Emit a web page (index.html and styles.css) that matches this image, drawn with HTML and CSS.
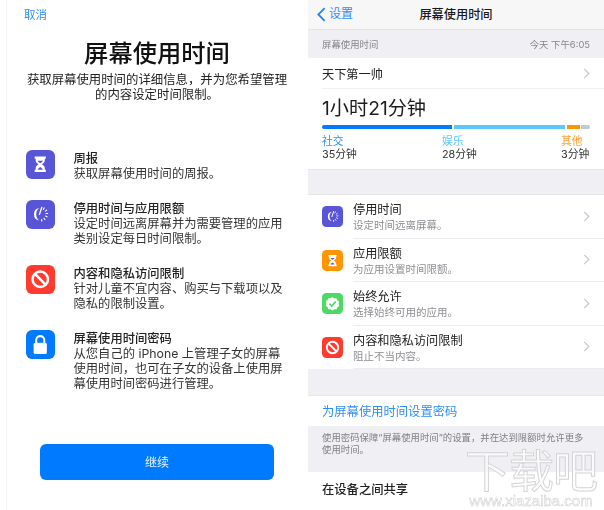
FILE: index.html
```html
<!DOCTYPE html>
<html lang="zh-CN">
<head>
<meta charset="utf-8">
<title>屏幕使用时间</title>
<link rel="stylesheet" href="styles.css">
</head>
<body>
<svg class="defs" width="0" height="0" aria-hidden="true">
  <defs>
    <symbol id="hourglass" viewBox="0 0 28 28">
      <path d="M8.5 6.5h11v2.2h-1v1.6c0 2-1.7 2.8-2.8 3.7 1.100.9 2.800 1.700 2.800 3.700v1.600h1v2.200h-11v-2.200h1v-1.600c0-2 1.700-2.800 2.800-3.700-1.100-.9-2.800-1.700-2.800-3.700v-1.600h-1z" fill="#fff"/>
      <path d="M11.300 10.500h5.400c-.3 1-1.700 1.700-2.700 2.500-1-.8-2.400-1.500-2.700-2.500zM11.500 19.300c.4-1.200 1.600-1.900 2.500-2.600.9.700 2.100 1.400 2.500 2.600z" class="glass-cut"/>
    </symbol>
    <symbol id="downtime" viewBox="0 0 28 28">
      <path d="M13 7.800a6.300 6.300 0 0 0 0 12.400c-2-1.600-3-3.800-3-6.200s1-4.600 3-6.200z" fill="#fff"/>
      <path d="M15.500 7.300l-2.300 6.800" stroke="#fff" stroke-width="1.300" fill="none" stroke-linecap="round"/>
      <g stroke="#fff" stroke-width="1.100" stroke-linecap="round">
        <path d="M17.800 7.800l-.7 1.500M20.300 10l-1.300.9M21.300 13.200h-1.600M20.700 16.500l-1.400-.7M18.600 19.200l-.9-1.300M15.600 20.700l-.3-1.600"/>
      </g>
    </symbol>
    <symbol id="block" viewBox="0 0 28 28">
      <circle cx="14" cy="14" r="7.600" fill="none" stroke="#fff" stroke-width="2.500"/>
      <path d="M8.800 8.800l10.400 10.400" stroke="#fff" stroke-width="2.500"/>
    </symbol>
    <symbol id="lock" viewBox="0 0 28 28">
      <rect x="7.500" y="12.500" width="13" height="11" rx="1.500" fill="#fff"/>
      <path d="M10 13v-3a4 4 0 0 1 8 0v3" fill="none" stroke="#fff" stroke-width="2"/>
    </symbol>
    <symbol id="allow" viewBox="0 0 28 28">
      <path d="M14 5.500l2.500 1.700 3-.2 1 2.800 2.500 1.700-.9 2.900.9 2.900-2.500 1.700-1 2.800-3-.2-2.500 1.700-2.500-1.700-3 .2-1-2.800L5 16.900l.9-2.900-.9-2.900 2.500-1.700 1-2.800 3 .2z" fill="#fff"/>
      <path d="M10 14.300l3 3 5.200-5.800" fill="none" stroke="#4cd964" stroke-width="2.200"/>
    </symbol>
    <symbol id="chevron" viewBox="0 0 7 12">
      <path d="M1 1l5 5-5 5" fill="none" stroke="#c7c7cc" stroke-width="1.300"/>
    </symbol>
  </defs>
</svg>

<main class="page">
  <section class="setup">
    <a class="cancel">取消</a>
    <h1 class="setup-title">屏幕使用时间</h1>
    <p class="setup-intro">获取屏幕使用时间的详细信息，并为您希望管理<br>的内容设定时间限制。</p>
    <ul class="features">
      <li class="feature">
        <svg class="feature-icon bg-indigo"><use href="#hourglass"/></svg>
        <div class="feature-text"><strong>周报</strong><span>获取屏幕使用时间的周报。</span></div>
      </li>
      <li class="feature">
        <svg class="feature-icon bg-indigo"><use href="#downtime"/></svg>
        <div class="feature-text"><strong>停用时间与应用限额</strong><span>设定时间远离屏幕并为需要管理的应用<br>类别设定每日时间限制。</span></div>
      </li>
      <li class="feature">
        <svg class="feature-icon bg-red"><use href="#block"/></svg>
        <div class="feature-text"><strong>内容和隐私访问限制</strong><span>针对儿童不宜内容、购买与下载项以及<br>隐私的限制设置。</span></div>
      </li>
      <li class="feature">
        <svg class="feature-icon bg-blue"><use href="#lock"/></svg>
        <div class="feature-text"><strong>屏幕使用时间密码</strong><span>从您自己的 iPhone 上管理子女的屏幕<br>使用时间，也可在子女的设备上使用屏<br>幕使用时间密码进行管理。</span></div>
      </li>
    </ul>
    <button class="continue">继续</button>
  </section>

  <section class="settings">
    <header class="nav">
      <a class="back">
        <svg class="back-chevron" viewBox="0 0 10 16"><path d="M8.500 1L1.500 8l7 7" fill="none" stroke="#1c86f7" stroke-width="2"/></svg>设置
      </a>
      <span class="nav-title">屏幕使用时间</span>
    </header>
    <div class="group-head"><span>屏幕使用时间</span><span>今天 下午6:05</span></div>
    <div class="card usage">
      <div class="user-row"><span>天下第一帅</span><svg class="chevron"><use href="#chevron"/></svg></div>
      <div class="total">1小时21分钟</div>
      <div class="bar">
        <i class="seg seg-social"></i><i class="seg seg-fun"></i><i class="seg seg-other"></i><i class="seg seg-rest"></i>
      </div>
      <div class="legend">
        <div class="legend-item legend-social"><b>社交</b><span>35分钟</span></div>
        <div class="legend-item legend-fun"><b>娱乐</b><span>28分钟</span></div>
        <div class="legend-item legend-other"><b>其他</b><span>3分钟</span></div>
      </div>
    </div>
    <div class="spacer"></div>
    <div class="card list">
      <div class="row">
        <svg class="row-icon bg-indigo"><use href="#downtime"/></svg>
        <div class="row-body"><div class="row-text"><strong>停用时间</strong><span>设定时间远离屏幕。</span></div><svg class="chevron"><use href="#chevron"/></svg></div>
      </div>
      <div class="row">
        <svg class="row-icon bg-orange"><use href="#hourglass"/></svg>
        <div class="row-body"><div class="row-text"><strong>应用限额</strong><span>为应用设置时间限额。</span></div><svg class="chevron"><use href="#chevron"/></svg></div>
      </div>
      <div class="row">
        <svg class="row-icon bg-green"><use href="#allow"/></svg>
        <div class="row-body"><div class="row-text"><strong>始终允许</strong><span>选择始终可用的应用。</span></div><svg class="chevron"><use href="#chevron"/></svg></div>
      </div>
      <div class="row">
        <svg class="row-icon bg-red"><use href="#block"/></svg>
        <div class="row-body"><div class="row-text"><strong>内容和隐私访问限制</strong><span>阻止不当内容。</span></div><svg class="chevron"><use href="#chevron"/></svg></div>
      </div>
    </div>
    <div class="spacer spacer-b"></div>
    <div class="card single link">为屏幕使用时间设置密码</div>
    <p class="note">使用密码保障“屏幕使用时间”的设置，并在达到限额时允许更多使用时间。</p>
    <div class="card single share">在设备之间共享</div>
    <div class="watermark" aria-hidden="true"><span class="wm-big">下载吧</span><span class="wm-url">www.xiazaiba.com</span></div>
  </section>
</main>
</body>
</html>
```

FILE: styles.css
```css
* { box-sizing: border-box; }
html, body { margin: 0; padding: 0; background: #fff; }
body {
  width: 604px;
  height: 510px;
  overflow: hidden;
  font-family: "Inter", "Noto Sans CJK SC", sans-serif;
  color: #1c1c1e;
}
.defs { position: absolute; }
.page {
  display: flex;
  height: 510px;
  filter: blur(0.35px);
}

/* left: onboarding */
.setup {
  width: 294px;
  margin-left: 6px;
  border-left: 1px solid #f6f6f6;
  display: flex;
  flex-direction: column;
  padding-left: 19px;
}
.cancel {
  font-size: 11.5px;
  line-height: 16px;
  margin: 7px 0 0 -2px;
  color: #2f8ffa;
}
.setup-title {
  margin: 13px 0 0 -20px;
  width: 302px;
  text-align: center;
  font-size: 24.300px;
  line-height: 34px;
  font-weight: 500;
  color: #111;
}
.setup-intro {
  margin: 3px 0 0 -20px;
  width: 302px;
  text-align: center;
  font-size: 12.400px;
  line-height: 14.500px;
  color: #222;
}
.features {
  list-style: none;
  margin: 49px 0 0;
  padding: 0;
  display: flex;
  flex-direction: column;
  gap: 20px;
}
.feature { display: flex; gap: 19px; }
.feature-icon {
  flex: none;
  width: 28.500px;
  height: 28.500px;
  border-radius: 6px;
  margin-top: -1px;
}
.feature-text {
  display: flex;
  flex-direction: column;
  font-size: 12.300px;
  line-height: 15px;
  color: #333;
}
.feature-text strong { font-weight: 500; color: #222; }
.bg-indigo { background: #5856d6; }
.bg-red { background: #ff3b30; }
.bg-blue { background: #007aff; }
.bg-orange { background: #ff9500; }
.bg-green { background: #4cd964; }
.glass-cut { fill: #5856d6; }
.bg-orange .glass-cut { fill: #ff9500; }
.continue {
  margin: auto 0 30.500px 14px;
  width: 234px;
  height: 36px;
  border: 0;
  border-radius: 6px;
  background: #007aff;
  color: #e6f1ff;
  font: inherit;
  font-size: 12px;
}

/* right: settings */
.settings {
  position: relative;
  margin-left: 8px;
  width: 296px;
  height: 510px;
  overflow: hidden;
  background: #efeff4;
  display: flex;
  flex-direction: column;
}
.nav {
  height: 30px;
  flex: none;
  background: #f7f7f8;
  border-bottom: 1px solid #e4e4e6;
  display: flex;
  align-items: center;
  justify-content: center;
  padding-bottom: 2px;
  position: relative;
}
.back {
  position: absolute;
  left: 9px;
  top: 5px;
  display: flex;
  align-items: center;
  gap: 3px;
  font-size: 12px;
  line-height: 18px;
  color: #2f8ffa;
}
.back-chevron { width: 9px; height: 15px; }
.nav-title { font-size: 12.200px; font-weight: 500; color: #1a1a1a; }
.group-head {
  height: 28px;
  flex: none;
  display: flex;
  justify-content: space-between;
  align-items: center;
  padding: 0 14px 0 14px;
  font-size: 9.400px;
  color: #85858a;
}
.card { background: #fff; }
.usage { height: 112px; flex: none; border-bottom: 1px solid #e6e6e9; padding-left: 14px; }
.user-row {
  height: 31px;
  display: flex;
  align-items: center;
  justify-content: space-between;
  padding: 1px 14px 0 0;
  font-size: 12.200px;
  border-bottom: 1px solid #efeff1;
  color: #222;
}
.chevron { width: 7px; height: 11px; flex: none; }
.total { font-size: 19.200px; line-height: 26px; margin-top: 6px; color: #1c1c1e; }
.bar { display: flex; gap: 1.500px; width: 268px; height: 4px; margin-top: 4px; }
.seg { display: block; height: 4px; }
.seg-social { width: 130px; background: #007aff; border-radius: 2px 0 0 2px; }
.seg-fun { width: 111.500px; background: #5ac8fa; }
.seg-other { width: 13px; background: #ff9500; }
.seg-rest { flex: 1; background: #c7c7cc; border-radius: 0 2px 2px 0; }
.legend { display: flex; margin-top: 5.500px; }
.legend-item { display: flex; flex-direction: column; font-size: 10.800px; line-height: 13px; color: #333; }
.legend-item b { font-weight: 400; }
.legend-social { width: 120px; }
.legend-social b { color: #2f8ffa; }
.legend-fun { width: 119px; }
.legend-fun b { color: #5ac8fa; }
.legend-other b { color: #ff9f2e; }
.spacer { height: 25px; flex: none; border-bottom: 1px solid #e6e6e9; }
.spacer-b { height: 27px; }
.list { flex: none; }
.row { height: 43.500px; display: flex; padding-left: 14px; }
.row-icon { flex: none; width: 21px; height: 21px; border-radius: 4.500px; margin: 11px 10px 0 0; }
.row-body {
  flex: 1;
  display: flex;
  align-items: center;
  justify-content: space-between;
  padding: 3px 14px 0 0;
  border-bottom: 1px solid #ececee;
}
.row-body .chevron { margin-top: -3px; }
.row-text { display: flex; flex-direction: column; }
.row-text strong { font-weight: 400; font-size: 12.200px; line-height: 16px; color: #222; }
.row-text span { font-size: 10.500px; line-height: 15px; color: #8e8e93; }
.single { height: 30px; flex: none; display: flex; align-items: center; padding-left: 14px; font-size: 12.300px; }
.link { color: #2f8ffa; }
.note {
  margin: 0;
  height: 46px;
  flex: none;
  padding: 6px 14px 0;
  font-size: 9.400px;
  line-height: 12px;
  color: #7f7f84;
}
.share { height: 38px; color: #222; font-weight: 500; padding-bottom: 4px; }
.watermark {
  position: absolute;
  left: 153px;
  top: 450px;
  width: 140px;
  display: flex;
  flex-direction: column;
  align-items: center;
}
.wm-big {
  font-size: 45px;
  line-height: 44px;
  letter-spacing: -1px;
  font-weight: 400;
  color: rgba(255,255,255,.65);
  -webkit-text-stroke: 1px #d4d4d7;
  white-space: nowrap;
}
.wm-url {
  font-family: "Liberation Sans", sans-serif;
  font-size: 15px;
  line-height: 13px;
  color: rgba(255,255,255,.6);
  -webkit-text-stroke: .5px #cdcdd0;
  white-space: nowrap;
}
```
